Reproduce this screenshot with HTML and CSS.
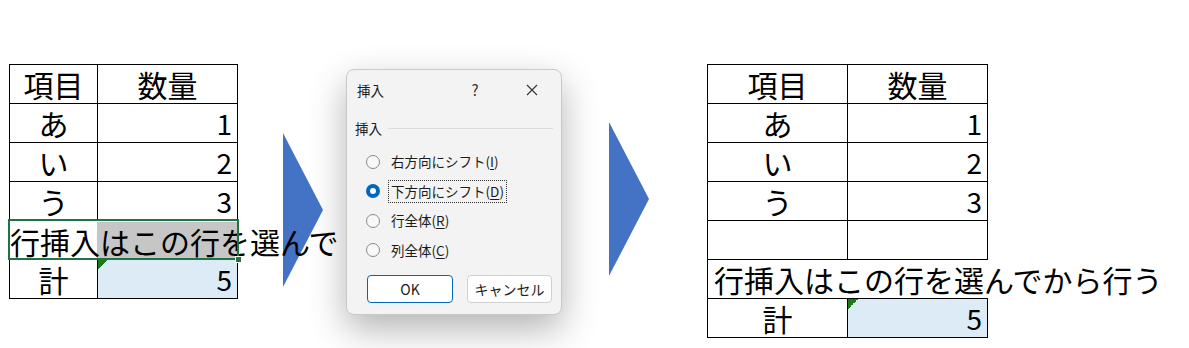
FILE: index.html
```html
<!DOCTYPE html>
<html>

<head>
	<meta charset="UTF-8">
	<title>行挿入</title>
	<link rel="stylesheet" href="styles.css">
</head>

<body>
	<div class="before">
		<div class="sheet sheet-before">
			<div class="cell">項目</div>
			<div class="cell">数量</div>
			<div class="cell">あ</div>
			<div class="cell num">1</div>
			<div class="cell">い</div>
			<div class="cell num">2</div>
			<div class="cell">う</div>
			<div class="cell num">3</div>
			<div class="cell wide selected">行挿入はこの行を選んでから行う</div>
			<div class="cell">計</div>
			<div class="cell num total">5</div>
		</div>
		<svg class="arrow arrow-first" viewBox="0 0 40 154">
			<polygon points="0,0 40,77 0,154" fill="currentColor"></polygon>
		</svg>
	</div>

	<div class="dialog">
		<div class="dialog-title">
			<span class="title-text">挿入</span>
			<span class="title-help">?</span>
			<span class="title-close">
				<svg viewBox="0 0 12 12">
					<path d="M1 1L11 11M11 1L1 11" stroke="currentColor" stroke-width="1.1" fill="none"></path>
				</svg>
			</span>
		</div>
		<div class="dialog-body">
			<div class="group-head">
				<span>挿入</span>
				<span class="group-line"></span>
			</div>
			<div class="options">
				<div class="option"><span class="radio"></span><span class="label">右方向にシフト(<u>I</u>)</span></div>
				<div class="option"><span class="radio on"></span><span class="label focus">下方向にシフト(<u>D</u>)</span></div>
				<div class="option"><span class="radio"></span><span class="label">行全体(<u>R</u>)</span></div>
				<div class="option"><span class="radio"></span><span class="label">列全体(<u>C</u>)</span></div>
			</div>
			<div class="buttons">
				<span class="btn btn-ok">OK</span>
				<span class="btn btn-cancel">キャンセル</span>
			</div>
		</div>
	</div>

	<svg class="arrow arrow-second" viewBox="0 0 40 154">
		<polygon points="0,0 40,77 0,154" fill="currentColor"></polygon>
	</svg>

	<div class="sheet sheet-after">
		<div class="cell">項目</div>
		<div class="cell">数量</div>
		<div class="cell">あ</div>
		<div class="cell num">1</div>
		<div class="cell">い</div>
		<div class="cell num">2</div>
		<div class="cell">う</div>
		<div class="cell num">3</div>
		<div class="cell"></div>
		<div class="cell"></div>
		<div class="cell wide">行挿入はこの行を選んでから行う</div>
		<div class="cell">計</div>
		<div class="cell num total">5</div>
	</div>
</body>

</html>
```

FILE: styles.css
```css
html,
body {
	margin: 0;
	padding: 0;
	width: 100%;
	height: 100%;
	background: #fff;
	overflow: hidden;
}

body {
	display: flex;
	align-items: flex-start;
	font-family: "Noto Sans CJK JP", sans-serif;
	color: #000;
}

/* left half: table before insert, clipped where the dialog starts */
.before {
	display: flex;
	align-items: flex-start;
	width: 340px;
	height: 348px;
	overflow: hidden;
	flex-shrink: 0;
	z-index: 1;
}

.sheet {
	display: grid;
	grid-auto-rows: 39px;
	border-left: 1px solid #000;
	border-top: 1px solid #000;
	font-size: 30px;
	flex-shrink: 0;
}

.sheet-before {
	grid-template-columns: 88px 140px;
	margin: 64px 0 0 9px;
}

.sheet-after {
	grid-template-columns: 140px 140px;
	margin: 64px 0 0 58px;
}

.cell {
	box-sizing: border-box;
	min-width: 0;
	border-right: 1px solid #000;
	border-bottom: 1px solid #000;
	line-height: 39px;
	text-align: center;
	white-space: nowrap;
}

.cell.num {
	text-align: right;
	padding-right: 5px;
	font-size: 28px;
}

.cell.wide {
	grid-column: 1 / -1;
	border-right: none;
	text-align: left;
	padding-left: 6px;
}

.sheet-before .cell.wide {
	padding-left: 0;
}

.cell.total {
	background: linear-gradient(135deg, #1c7a1c 50%, transparent 50%) 0 0 / 10px 10px no-repeat, #ddebf7;
}

.cell.selected {
	position: relative;
	background: linear-gradient(90deg, #fff 87px, #c6c6c6 87px);
	background-clip: content-box;
	padding-top: 1px;
}

.cell.selected::after {
	content: "";
	position: absolute;
	top: -2px;
	left: -2px;
	right: -1px;
	bottom: -1px;
	border: 2px solid #217346;
}

.cell.selected::before {
	content: "";
	position: absolute;
	right: -4px;
	bottom: -4px;
	width: 5px;
	height: 5px;
	background: #217346;
	border: 1px solid #fff;
	z-index: 1;
}

.arrow {
	width: 40px;
	height: 154px;
	color: #4472c4;
	flex-shrink: 0;
}

.arrow-first {
	margin: 133px 0 0 45px;
}

.arrow-second {
	margin: 122px 0 0 47px;
}

/* insert dialog */
.dialog {
	box-sizing: border-box;
	width: 216px;
	height: 246px;
	margin: 69px 0 0 6px;
	flex-shrink: 0;
	background: #f3f3f3;
	border: 1px solid #c9c9c9;
	border-radius: 8px;
	box-shadow: 0 14px 36px rgba(0, 0, 0, 0.3);
	color: #1b1b1b;
	font-size: 13.5px;
}

.dialog-title {
	display: flex;
	align-items: center;
	height: 39px;
	padding: 0 6px 0 10px;
}

.title-text {
	flex: 1;
	font-size: 13.5px;
}

.title-help {
	width: 30px;
	margin-right: 19px;
	text-align: center;
	font-size: 15px;
	color: #333;
}

.title-close {
	width: 46px;
	display: flex;
	justify-content: center;
	color: #333;
}

.title-close svg {
	width: 12px;
	height: 12px;
}

.dialog-body {
	padding: 0 8px;
}

.group-head {
	display: flex;
	align-items: center;
	height: 22px;
	margin-top: 8px;
}

.group-line {
	flex: 1;
	margin-left: 6px;
	border-top: 1px solid #dcdcdc;
}

.options {
	margin-top: 8px;
}

.option {
	display: flex;
	align-items: center;
	height: 29.5px;
	padding-left: 11px;
}

.radio {
	box-sizing: border-box;
	width: 14px;
	height: 14px;
	border-radius: 50%;
	border: 1px solid #8a8a8a;
	background: #f8f8f8;
}

.radio.on {
	border: 4px solid #0067c0;
	background: #fff;
}

.label {
	margin-left: 8px;
	padding: 0 2px;
	line-height: 21px;
	border: 1px dotted transparent;
}

.label.focus {
	border-color: #333;
}

.label u {
	text-underline-offset: 2px;
}

.buttons {
	display: flex;
	gap: 14px;
	margin: 10px 0 0 12px;
}

.btn {
	box-sizing: border-box;
	height: 28px;
	line-height: 26px;
	text-align: center;
	background: #fdfdfd;
	border: 1px solid #d0d0d0;
	border-radius: 4px;
	font-size: 14px;
}

.btn-ok {
	width: 86px;
	border-color: #0067c0;
	background: #fff;
}

.btn-cancel {
	width: 85px;
}
```
